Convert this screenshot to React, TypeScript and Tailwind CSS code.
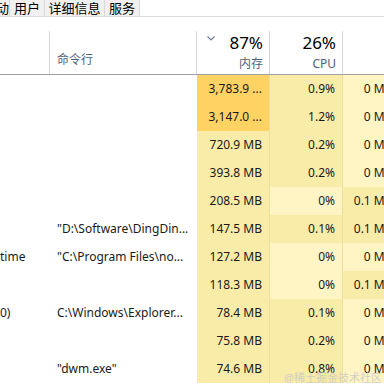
const HOT = 'bg-[#ffd264]'
const MID = 'bg-[#f9eca8]'
const LOW = 'bg-[#fff4c4]'

interface Row {
  name: string
  cmd: string
  mem: string
  memBg: string
  cpu: string
  cpuBg: string
  disk: string
  diskBg: string
}

const rows: Row[] = [
  { name: '', cmd: '', mem: '3,783.9 ...', memBg: HOT, cpu: '0.9%', cpuBg: MID, disk: '0 MB/秒', diskBg: LOW },
  { name: '', cmd: '', mem: '3,147.0 ...', memBg: HOT, cpu: '1.2%', cpuBg: MID, disk: '0 MB/秒', diskBg: LOW },
  { name: '', cmd: '', mem: '720.9 MB', memBg: MID, cpu: '0.2%', cpuBg: MID, disk: '0 MB/秒', diskBg: LOW },
  { name: '', cmd: '', mem: '393.8 MB', memBg: MID, cpu: '0.2%', cpuBg: MID, disk: '0 MB/秒', diskBg: LOW },
  { name: '', cmd: '', mem: '208.5 MB', memBg: MID, cpu: '0%', cpuBg: LOW, disk: '0.1 MB/秒', diskBg: MID },
  { name: '', cmd: '"D:\\Software\\DingDin...', mem: '147.5 MB', memBg: MID, cpu: '0.1%', cpuBg: MID, disk: '0.1 MB/秒', diskBg: MID },
  { name: 'time', cmd: '"C:\\Program Files\\no...', mem: '127.2 MB', memBg: MID, cpu: '0%', cpuBg: LOW, disk: '0 MB/秒', diskBg: LOW },
  { name: '', cmd: '', mem: '118.3 MB', memBg: MID, cpu: '0%', cpuBg: LOW, disk: '0.1 MB/秒', diskBg: MID },
  { name: '0)', cmd: 'C:\\Windows\\Explorer...', mem: '78.4 MB', memBg: MID, cpu: '0.1%', cpuBg: MID, disk: '0 MB/秒', diskBg: LOW },
  { name: '', cmd: '', mem: '75.8 MB', memBg: MID, cpu: '0.2%', cpuBg: MID, disk: '0 MB/秒', diskBg: LOW },
  { name: '', cmd: '"dwm.exe"', mem: '74.6 MB', memBg: MID, cpu: '0.8%', cpuBg: MID, disk: '0 MB/秒', diskBg: LOW },
]

function Tab({ label, className }: { label: string; className: string }) {
  return (
    <div className={`h-[16px] flex items-center justify-center border-r border-[#d9d9d9] overflow-hidden whitespace-nowrap ${className}`}>
      {label}
    </div>
  )
}

export default function App() {
  return (
    <div
      className="w-[384px] h-[384px] bg-white overflow-hidden relative text-[12px] text-[#1a1a1a]"
      style={{ fontFamily: '"Noto Sans", "Noto Sans CJK SC", sans-serif' }}
    >
      {/* tabs */}
      <div className="flex h-[17px] border-b border-[#dadada] text-[13px] text-black leading-none">
        <div className="flex bg-[#f0f0f0]">
          <div className="w-[10px] h-[16px] flex items-center justify-end overflow-hidden border-r border-[#d9d9d9] whitespace-nowrap">启动</div>
          <Tab label="用户" className="w-[35px]" />
          <Tab label="详细信息" className="w-[60px]" />
          <Tab label="服务" className="w-[35px]" />
        </div>
      </div>

      {/* header */}
      <div className="mt-[14px] flex h-[44px] border-b border-[#a0a0a0] w-[420px]">
        <div className="w-[50px] shrink-0 border-r border-[#d5d5d5]" />
        <div className="w-[147px] shrink-0 border-r border-[#d5d5d5] flex items-end pl-[7px] pb-[5px] text-[#4c607a]">
          命令行
        </div>
        <div className="w-[73px] shrink-0 border-r border-[#d5d5d5] relative flex flex-col items-end pr-[6px]">
          <svg className="absolute left-[10px] top-[5px]" width="8" height="5" viewBox="0 0 8 5">
            <path d="M0.5 0.5 L4 4 L7.5 0.5" fill="none" stroke="#6a7c94" strokeWidth="1.1" />
          </svg>
          <div className="text-[17px] leading-none mt-[3px] text-black">87%</div>
          <div className="mt-[7px] text-[#4c607a] leading-none">内存</div>
        </div>
        <div className="w-[73px] shrink-0 border-r border-[#d5d5d5] flex flex-col items-end pr-[6px]">
          <div className="text-[17px] leading-none mt-[3px] text-black">26%</div>
          <div className="mt-[7px] text-[#4c607a] leading-none">CPU</div>
        </div>
        <div className="w-[77px] shrink-0" />
      </div>

      {/* rows */}
      <div className="flex flex-col w-[420px]">
        {rows.map((r, i) => (
          <div key={i} className="flex h-[28px] items-center whitespace-nowrap">
            <div className="w-[50px] shrink-0 h-full flex items-center overflow-hidden">{r.name}</div>
            <div className="w-[147px] shrink-0 h-full flex items-center pl-[7px] overflow-hidden">{r.cmd}</div>
            <div className={`w-[73px] shrink-0 h-full flex items-center justify-end pr-[7px] border-r border-[#efdf9c] ${r.memBg}`}>{r.mem}</div>
            <div className={`w-[73px] shrink-0 h-full flex items-center justify-end pr-[7px] border-r border-[#efdf9c] ${r.cpuBg}`}>{r.cpu}</div>
            <div className={`w-[73px] shrink-0 h-full flex items-center justify-end pr-[7px] ${r.diskBg}`}>{r.disk}</div>
          </div>
        ))}
      </div>

      <div className="absolute right-[2px] bottom-[1px] text-[11px] text-[#c8c8c8] leading-none opacity-80">@稀土掘金技术社区</div>
    </div>
  )
}
